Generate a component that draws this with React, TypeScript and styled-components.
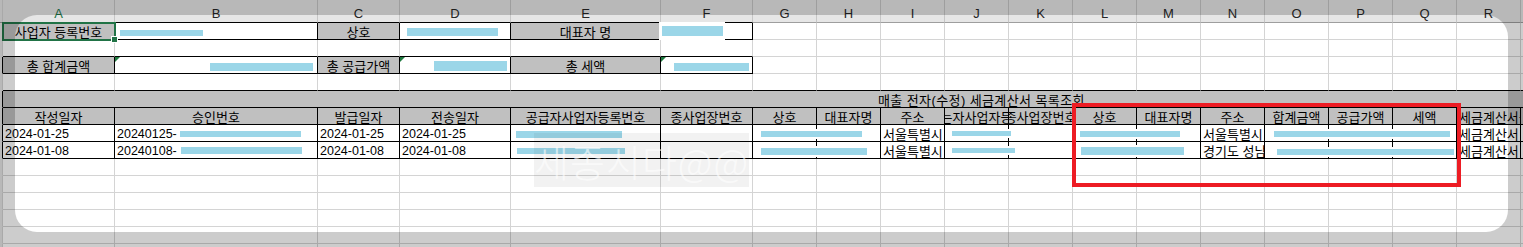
import React from "react";
import styled, { createGlobalStyle } from "styled-components";

const GRID = "#d4d4d4";
const INK = "#000";
const SILVER = "#c0c0c0";
const SKY = "#9bd6e8";

type Align = "left" | "center";

type Spec = {
	text?: string;
	fill?: string;
	right?: string;
	bottom?: string;
	align?: Align;
	flag?: boolean;
};

const GlobalStyle = createGlobalStyle`
	html, body {
		margin: 0;
		padding: 0;
		background: #fff;
	}
	body {
		font-family: "Liberation Sans", "Noto Sans CJK KR", sans-serif;
	}
`;

const Page = styled.div`
	position: relative;
	width: 1523px;
	height: 247px;
	overflow: hidden;
	background: #fff;
`;

const Sheet = styled.div`
	display: grid;
	grid-template-columns: 3px 112px 203px 82px 111px 150px 92px repeat(12, 64px) 1fr;
	grid-template-rows: 23px repeat(14, 17px);
`;

const Strip = styled.div<{ $edge?: string; $head?: boolean }>`
	box-sizing: border-box;
	background: #e6e6e6;
	border-right: 1px solid ${(p) => p.$edge ?? GRID};
	border-bottom: 1px solid ${(p) => (p.$head ? "#9e9e9e" : "#e6e6e6")};
`;

const ColHead = styled.div<{ $active?: boolean; $under?: string }>`
	box-sizing: border-box;
	padding-top: 7px;
	font-size: 13px;
	line-height: 13px;
	text-align: center;
	color: ${(p) => (p.$active ? "#217346" : "#262626")};
	background: #e6e6e6;
	border-right: 1px solid #c6c6c6;
	border-bottom: 1px solid ${(p) => p.$under ?? "#9e9e9e"};
`;

const Cell = styled.div<{
	$fill?: string;
	$right?: string;
	$bottom?: string;
	$align?: Align;
	$flag?: boolean;
}>`
	position: relative;
	box-sizing: border-box;
	display: flex;
	justify-content: ${(p) => (p.$align === "left" ? "flex-start" : "center")};
	padding: 3px 2px 0;
	min-width: 0;
	overflow: hidden;
	white-space: nowrap;
	font-size: 13px;
	line-height: 13px;
	color: #000;
	background: ${(p) => p.$fill ?? "#fff"};
	border-right: 1px solid ${(p) => p.$right ?? GRID};
	border-bottom: 1px solid ${(p) => p.$bottom ?? GRID};

	&::before {
		content: "";
		display: ${(p) => (p.$flag ? "block" : "none")};
		position: absolute;
		top: 0;
		left: 0;
		border-top: 5px solid #1e7a3f;
		border-right: 5px solid transparent;
	}
`;

const TitleCell = styled.div`
	grid-column: 2 / -1;
	box-sizing: border-box;
	padding: 3px 0 0 875px;
	font-size: 13px;
	line-height: 13px;
	letter-spacing: 0.4px;
	white-space: nowrap;
	background: ${SILVER};
	border-bottom: 1px solid ${INK};
`;

const Num = styled.span`
	font-size: 12.5px;
`;

const Redaction = styled.div`
	position: absolute;
	background: #fff;
	display: flex;
	align-items: center;
`;

const Bar = styled.div`
	width: 100%;
	background: ${SKY};
`;

const Patch = styled.div`
	position: absolute;
	left: 659px;
	top: 22px;
	width: 66px;
	height: 18px;
	background: #fff;
	display: flex;
	align-items: center;
	padding: 0 2px 0 3px;
	box-sizing: border-box;
`;

const Selection = styled.div`
	position: absolute;
	left: 2px;
	top: 22px;
	width: 114px;
	height: 19px;
	box-sizing: border-box;
	border: 2px solid #217346;

	&::after {
		content: "";
		position: absolute;
		right: -4px;
		bottom: -4px;
		width: 5px;
		height: 5px;
		background: #217346;
		border: 1px solid #fff;
	}
`;

const Watermark = styled.div`
	position: absolute;
	left: 534px;
	top: 133px;
	width: 215px;
	height: 54px;
	display: flex;
	align-items: center;
	justify-content: center;
	background: rgba(0, 0, 0, 0.05);
	color: rgba(255, 255, 255, 0.6);
	font-family: "Noto Sans CJK KR", sans-serif;
	font-size: 38px;
	font-weight: 300;
	letter-spacing: 1px;
	white-space: nowrap;
	overflow: hidden;
`;

const Highlight = styled.div`
	position: absolute;
	left: 1072px;
	top: 103px;
	width: 389px;
	height: 84px;
	box-sizing: border-box;
	border: 4px solid #ed1c24;
`;

const Vignette = styled.div`
	position: absolute;
	left: 15px;
	top: 15px;
	right: 15px;
	bottom: 15px;
	border-radius: 22px;
	box-shadow: 0 0 0 800px rgba(0, 0, 0, 0.2);
	pointer-events: none;
`;

const LETTERS = "ABCDEFGHIJKLMNOPQR".split("");

const HEADERS = [
	"작성일자",
	"승인번호",
	"발급일자",
	"전송일자",
	"공급자사업자등록번호",
	"종사업장번호",
	"상호",
	"대표자명",
	"주소",
	"공급받는자사업자등록번호",
	"종사업장번호",
	"상호",
	"대표자명",
	"주소",
	"합계금액",
	"공급가액",
	"세액",
];

const DATA = [
	["2024-01-25", "20240125-", "2024-01-25", "2024-01-25", "", "", "", "", "서울특별시 강남구", "", "", "", "", "서울특별시 중구", "", "", "", "세금계산서"],
	["2024-01-08", "20240108-", "2024-01-08", "2024-01-08", "", "", "", "", "서울특별시 서초구", "", "", "", "", "경기도 성남시", "", "", "", "세금계산서"],
];

// [x, y, width, height] of the blue redaction strokes
const BARS: [number, number, number, number][] = [
	[120, 30, 83, 6],
	[407, 28, 91, 8],
	[210, 63, 103, 8],
	[434, 61, 73, 10],
	[674, 63, 75, 8],
	[180, 131, 121, 6],
	[181, 147, 121, 7],
	[516, 131, 106, 7],
	[517, 148, 108, 6],
	[761, 131, 101, 6],
	[761, 148, 106, 7],
	[952, 131, 59, 5],
	[952, 148, 63, 5],
	[1080, 131, 100, 6],
	[1081, 147, 103, 8],
	[1274, 131, 176, 6],
	[1277, 149, 177, 6],
];

const blank = (n: number, bottom?: string): Spec[] =>
	Array.from({ length: n }, () => ({ bottom }));

const box = (text?: string, fill = "#fff", flag = false): Spec => ({
	text,
	fill,
	right: INK,
	bottom: INK,
	flag,
});

type Row = { edge: string; cells: Spec[] } | { edge: string; title: string };

const ROWS: Row[] = [
	{
		edge: INK,
		cells: [
			box("사업자 등록번호", SILVER),
			box(),
			box("상호", SILVER),
			box(),
			box("대표자 명", SILVER),
			box(),
			...blank(13),
		],
	},
	{ edge: GRID, cells: [...blank(6, INK), ...blank(13)] },
	{
		edge: INK,
		cells: [
			box("총 합계금액", SILVER),
			box(undefined, "#fff", true),
			box("총 공급가액", SILVER),
			box(undefined, "#fff", true),
			box("총 세액", SILVER),
			box(undefined, "#fff", true),
			...blank(13),
		],
	},
	{ edge: GRID, cells: blank(19, INK) },
	{ edge: INK, title: "매출 전자(수정) 세금계산서 목록조회" },
	{
		edge: INK,
		cells: [
			...HEADERS.map((text) => ({ text, fill: SILVER, right: INK, bottom: INK })),
			{ text: "세금계산서종류", align: "left" as Align, fill: SILVER, right: INK, bottom: INK },
			{ fill: SILVER, right: INK, bottom: INK },
		],
	},
	...DATA.map((values) => ({
		edge: INK,
		cells: [
			...values.map((text) => ({ text, align: "left" as Align, right: INK, bottom: INK })),
			{ right: INK, bottom: INK },
		],
	})),
	...Array.from({ length: 6 }, () => ({ edge: GRID, cells: blank(19) })),
];

const isNumber = (text: string) => /^[0-9-]+$/.test(text);

const App: React.FC = () => {
	return (
		<>
			<GlobalStyle />
			<Page>
				<Sheet>
					<Strip $head />
					{LETTERS.map((letter, i) => (
						<ColHead key={letter} $active={i === 0} $under={i < 6 ? INK : undefined}>
							{letter}
						</ColHead>
					))}
					<ColHead />

					{ROWS.map((row, r) => (
						<React.Fragment key={r}>
							<Strip $edge={row.edge} />
							{"title" in row ? (
								<TitleCell>{row.title}</TitleCell>
							) : (
								row.cells.map((cell, c) => (
									<Cell
										key={c}
										$fill={cell.fill}
										$right={cell.right}
										$bottom={cell.bottom}
										$align={cell.align}
										$flag={cell.flag}
									>
										{cell.text && isNumber(cell.text) ? <Num>{cell.text}</Num> : cell.text}
									</Cell>
								))
							)}
						</React.Fragment>
					))}
				</Sheet>

				<Patch>
					<Bar style={{ height: 10 }} />
				</Patch>

				{BARS.map(([x, y, w, h], i) => (
					<Redaction key={i} style={{ left: x, top: y - 2, width: w, height: h + 4 }}>
						<Bar style={{ height: h }} />
					</Redaction>
				))}

				<Selection />
				<Watermark>세종시다@@</Watermark>
				<Highlight />
				<Vignette />
			</Page>
		</>
	);
};

export default App;
